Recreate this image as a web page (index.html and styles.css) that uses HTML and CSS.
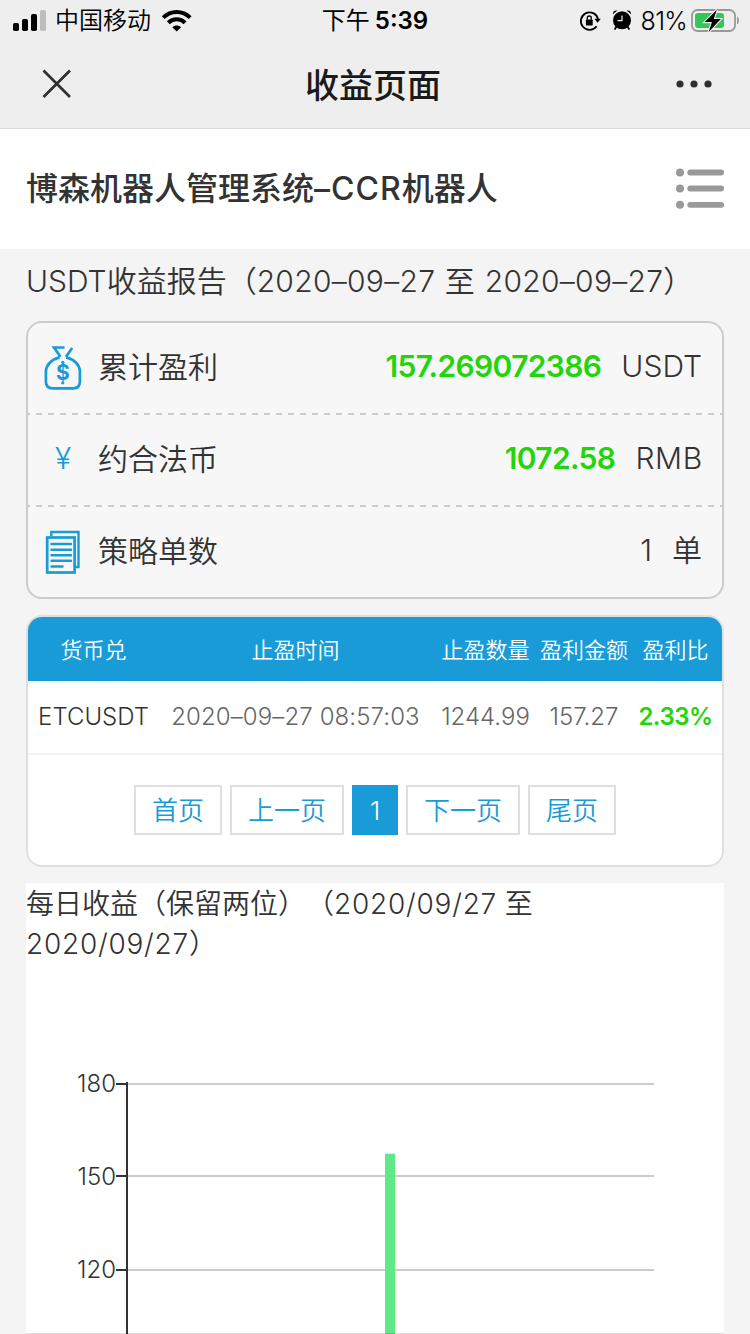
FILE: index.html
```html
<!DOCTYPE html>
<html lang="zh-CN">
<head>
<meta charset="utf-8">
<title>收益页面</title>
<link rel="stylesheet" href="styles.css">
</head>
<body>
<div class="screen">
  <div class="topbar">
    <div class="status">
      <div class="status-left">
        <svg class="signal" width="34" height="22" viewBox="0 0 34 22"><rect x="0" y="13" width="6" height="8" rx="1.8"/><rect x="9" y="9" width="6" height="12" rx="1.8"/><rect x="18" y="4" width="6" height="17" rx="1.8"/><rect x="27" y="0" width="6" height="21" rx="1.8" fill="#bdbdbd"/></svg>
        <span class="carrier">中国移动</span>
        <svg class="wifi" width="32" height="24" viewBox="0 0 32 24"><g fill="none" stroke="#000" stroke-width="4"><path d="M2.200 8.600C9.800 1 21.600 1 29.200 8.600"/><path d="M7.300 13.800C12 9.200 19.400 9.200 24.100 13.800"/></g><path d="M15.700 22.600L11.300 18.200C13.700 15.900 17.700 15.900 20.100 18.200Z"/></svg>
      </div>
      <div class="status-time"><span class="ampm">下午</span><span class="clock">5:39</span></div>
      <div class="status-right">
        <svg class="lock" width="22" height="22" viewBox="0 0 22 22"><path d="M19 9A8.700 8.700 0 1 0 17.600 16.200" fill="none" stroke="#000" stroke-width="1.800"/><path d="M15.400 8.800h6.400l-3.200 4z"/><rect x="6.900" y="9.600" width="6.800" height="5.900" rx=".7"/><path d="M8.300 9.800V8a2 2 0 0 1 4 0v1.800" fill="none" stroke="#000" stroke-width="1.300"/></svg>
        <svg class="alarm" width="20" height="22" viewBox="0 0 20 22"><circle cx="10" cy="11.300" r="9"/><path d="M.8 5.200C.8 2.200 3 .8 5.500 1.600ZM19.200 5.200C19.200 2.200 17 .8 14.500 1.600Z"/><path d="M4.500 17.500L2.600 20.600M15.500 17.500l1.900 3.100" stroke="#000" stroke-width="1.800"/><path d="M10 6.500v5.200H5.500" fill="none" stroke="#eee" stroke-width="1.200"/></svg>
        <span class="percent">81%</span>
        <svg class="battery" width="50" height="26" viewBox="0 0 50 26"><rect x="1" y="2" width="43" height="21" rx="5.500" fill="none" stroke="#999" stroke-width="1.800"/><path d="M46 8.500c2.600 1.300 2.600 6.700 0 8z" fill="#999"/><rect x="4" y="5" width="29" height="15" rx="3" fill="#33c759"/><path d="M25.800 1.800L13.700 14.100h7.200l-3.200 10L29.800 11h-7.100z" stroke="#eee" stroke-width="2.200" paint-order="stroke"/></svg>
      </div>
    </div>
    <div class="nav">
      <svg class="close" width="30" height="30" viewBox="0 0 30 30"><path d="M1.500 1.500L28 28M28 1.500L1.500 28" stroke="#2e3030" stroke-width="2.700" fill="none"/></svg>
      <h1 class="nav-title">收益页面</h1>
      <svg class="more" width="36" height="8" viewBox="0 0 36 8"><g fill="#2e3030"><circle cx="4" cy="4" r="3.600"/><circle cx="18" cy="4" r="3.600"/><circle cx="32" cy="4" r="3.600"/></g></svg>
    </div>
  </div>

  <header class="brand">
    <h2 class="brand-name">博森机器人管理系统<span class="brand-latin">–CCR</span>机器人</h2>
    <svg class="menu" width="48" height="42" viewBox="0 0 48 42"><g fill="#999"><circle cx="4" cy="4.500" r="4"/><circle cx="4" cy="20.500" r="4"/><circle cx="4" cy="36.800" r="4"/><rect x="11.300" y="1.600" width="36.700" height="5.800" rx="2.900"/><rect x="11.300" y="17.600" width="36.700" height="5.800" rx="2.900"/><rect x="11.300" y="33.900" width="36.700" height="5.800" rx="2.900"/></g></svg>
  </header>

  <main class="content">
    <p class="report-title">USDT收益报告（<span class="range">2020–09–27 至 2020–09–27</span>）</p>

    <section class="summary">
      <div class="summary-row">
        <svg class="row-icon" width="38" height="46" viewBox="0 0 38 46"><g fill="none" stroke="#189bd7" stroke-width="2.700"><path d="M15.600 12.400C7 14.500 1.900 20.500 1.900 26.500v10c0 4.300 2.500 6.800 6.700 6.800h20.600c4.300 0 6.700-2.500 6.700-6.800v-10c0-6-5-12-13.700-14.100"/><path d="M20.500 2.500H10l6.500 9.300M28.200 3l-6.200 8.800"/></g><circle cx="18.800" cy="17.300" r="1.600" fill="#189bd7"/><circle cx="18.800" cy="37.800" r="1.600" fill="#189bd7"/><text x="18.800" y="34.600" class="bag-sign">$</text></svg>
        <span class="row-label">累计盈利</span>
        <span class="row-value gain">157.269072386</span><span class="row-unit">USDT</span>
      </div>
      <div class="summary-row">
        <span class="row-icon yen">¥</span>
        <span class="row-label">约合法币</span>
        <span class="row-value gain">1072.58</span><span class="row-unit rmb">RMB</span>
      </div>
      <div class="summary-row">
        <svg class="row-icon" width="38" height="46" viewBox="0 0 38 46"><g fill="none" stroke="#189bd7"><path d="M7.300 7V3h27.200v35h-4.300" stroke-width="2.400"/><rect x="3.200" y="8.500" width="27.400" height="35" stroke-width="2.700"/><path d="M7.500 15h19.500M7.500 20.700h19.500M7.500 26.200h19.500M7.500 31.800h19.500M7.500 37.500h11" stroke-width="2.400" stroke-linecap="round"/></g></svg>
        <span class="row-label">策略单数</span>
        <span class="row-value">1</span><span class="row-unit">单</span>
      </div>
    </section>

    <section class="orders">
      <div class="orders-head"><span>货币兑</span><span>止盈时间</span><span>止盈数量</span><span>盈利金额</span><span>盈利比</span></div>
      <div class="orders-row"><span class="pair">ETCUSDT</span><span class="date">2020–09–27 08:57:03</span><span>1244.99</span><span>157.27</span><span class="ratio">2.33%</span></div>
      <nav class="pager"><a>首页</a><a>上一页</a><a class="current">1</a><a>下一页</a><a>尾页</a></nav>
    </section>

    <section class="daily">
      <p class="daily-title">每日收益（保留两位）<span class="daily-open">（</span><span class="day">2020/09/27</span> 至<br><span class="day">2020/09/27</span>）</p>
      <svg class="chart" width="698" height="371" viewBox="26 963 698 371">
        <g fill="#ccc"><rect x="128" y="1083" width="526" height="2"/><rect x="128" y="1175" width="526" height="2"/><rect x="128" y="1269" width="526" height="2"/></g>
        <rect x="385" y="1153.700" width="10" height="181" fill="#60e986"/>
        <g fill="#333"><rect x="126" y="1082" width="2" height="252"/><rect x="116" y="1083" width="11" height="2"/><rect x="116" y="1175" width="11" height="2"/><rect x="116" y="1269" width="11" height="2"/></g>
        <g class="axis"><text x="116" y="1091.500">180</text><text x="116" y="1184.500">150</text><text x="116" y="1278">120</text></g>
        <rect x="26" y="1333" width="698" height="1" fill="#000" opacity=".12"/>
      </svg>
    </section>
  </main>
</div>
</body>
</html>
```
FILE: styles.css
```css
* { box-sizing: border-box; }
body { margin: 0; background: #f4f4f4; color: #333; font-family: Inter, "Noto Sans CJK SC", sans-serif; font-weight: 350; }
h1, h2, p { margin: 0; }
svg { display: block; flex: none; }
.screen { width: 750px; height: 1334px; overflow: hidden; white-space: nowrap; }

.topbar { height: 129px; background: #eee; border-bottom: 1px solid #d9d9d9; color: #000; }
.status { height: 40px; display: grid; grid-template-columns: 1fr auto 1fr; align-items: center; padding: 0 9px 0 13px; }
.status-left, .status-right { display: flex; align-items: center; }
.status-right { justify-content: flex-end; }
.carrier { font-size: 24px; margin-left: 8px; line-height: 40px; padding-top: 1px; }
.wifi { margin-left: 10px; }
.status-time { display: flex; align-items: center; font-size: 24px; line-height: 40px; padding: 1px 4px 0 0; }
.ampm { font-weight: 400; }
.clock { font-weight: 600; margin-left: 5px; }
.percent { font-size: 25px; font-weight: 350; line-height: 40px; margin-left: 9px; letter-spacing: -.7px; padding-top: 1px; }
.alarm { margin-left: 11px; margin-bottom: 2px; }
.battery { margin-left: 4px; }
.nav { height: 88px; display: flex; align-items: center; justify-content: space-between; padding: 0 38px 0 42px; }
.nav-title { font-size: 34px; font-weight: 500; color: #1a1a1a; padding: 0 2px 2px 0; }

.brand { height: 120px; background: #fff; display: flex; align-items: center; justify-content: space-between; padding: 0 26px; }
.brand-name { font-size: 32px; font-weight: 500; padding-bottom: 6px; }
.brand-latin { letter-spacing: 1px; }

.content { padding: 0 26px; }
.report-title { height: 72px; line-height: 62px; padding-top: 1px; font-size: 30px; }
.range { letter-spacing: .3px; word-spacing: .8px; }
.summary { border: 2px solid #ccc; border-radius: 16px; background: #f7f7f7; }
.summary-row { height: 92px; padding: 0 20px 2px 16px; display: flex; align-items: center; font-size: 30px; line-height: 44px; background: repeating-linear-gradient(90deg, #ccc 0 6px, transparent 6px 12px) -4px 100% / 102% 2px no-repeat; }
.summary-row:last-child { height: 90px; padding-bottom: 0; background: none; }
.row-icon { width: 38px; margin-right: 16px; }
.yen { text-align: center; color: #189bd7; font-size: 30px; padding-bottom: 4px; }
.bag-sign { font-size: 21px; font-weight: 700; fill: #189bd7; text-anchor: middle; }
.row-label { padding-bottom: 3px; }
.row-value { margin-left: auto; padding-bottom: 4px; }
.row-unit { margin-left: 20px; padding-bottom: 4px; }
.rmb { letter-spacing: .7px; margin-right: -1px; }
.gain { color: #22d50a; font-weight: 560; letter-spacing: -.65px; }

.orders { margin-top: 16px; height: 252px; border: 2px solid #dfdfdf; border-radius: 16px; background: #fff; overflow: hidden; }
.orders-head, .orders-row { display: grid; grid-template-columns: 131px 273px 107px 90px 93px; align-items: center; text-align: center; }
.orders-head { height: 64px; padding-bottom: 3px; background: #189bd7; color: #fff; font-size: 22px; }
.orders-row { height: 74px; padding-bottom: 1px; border-bottom: 2px solid #f4f4f4; font-size: 24px; color: #666; }
.pair { color: #333; }
.date { letter-spacing: .1px; }
.ratio { color: #22d50a; font-weight: 560; letter-spacing: -.5px; }
.pager { display: flex; justify-content: center; gap: 8px; padding-top: 30px; color: #189bd7; font-size: 26px; }
.pager a { height: 50px; line-height: 48px; padding: 0 16px; border: 2px solid #dfdfdf; }
.pager .current { width: 46px; padding: 0; text-align: center; color: #fff; background: #189bd7; border-color: #189bd7; }

.daily { margin-top: 16px; background: #fff; }
.daily-title { height: 80px; line-height: 40px; padding-top: 1px; font-size: 28px; }
.daily-open { margin-left: 14px; }
.day { letter-spacing: .75px; }
.axis { font-size: 24px; fill: #333; text-anchor: end; }
```
